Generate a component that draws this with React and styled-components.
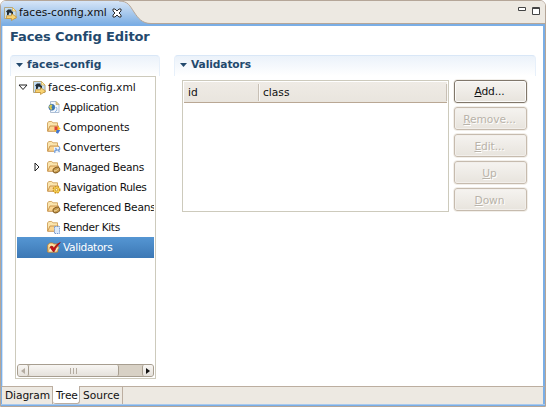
import React from "react";
import styled, { createGlobalStyle } from "styled-components";

const Global = createGlobalStyle`
  * { box-sizing: border-box; }
  body { margin: 0; overflow: hidden; background: #fff; }
`;

const Editor = styled.div`
  width: 546px;
  height: 407px;
  display: flex;
  flex-direction: column;
  background: #fff;
  border: 1px solid #b5a698;
  border-radius: 6px 6px 0 0;
  overflow: hidden;
  font-family: "DejaVu Sans", sans-serif;
  font-size: 10.67px;
  color: #111;
  white-space: nowrap;
`;
const Label = styled.span`
  letter-spacing: ${(p) => p.$ls || 0}px;
`;
const TitleBar = styled.header`
  height: 23px;
  flex: none;
  display: flex;
  align-items: flex-start;
  background: #ede9e2;
  border-bottom: 1px solid #b5a698;
`;
const FileTab = styled.div`
  width: 118px;
  height: 23px;
  flex: none;
  display: flex;
  align-items: center;
  padding-left: 2px;
  background: linear-gradient(#d6e5f7, #7eafe3);
  z-index: 1;

  > * {
    flex: none;
  }
`;
const FileName = styled(Label)`
  margin: 0 5px 0 1px;
  width: 88px;
`;
const WindowButtons = styled.div`
  margin-left: auto;
  display: flex;
  gap: 4px;
  padding: 5px 4px 0 0;
`;
const Body = styled.main`
  flex: 1;
  display: flex;
  flex-direction: column;
  border: solid #7aaee6;
  border-width: 2px 2px 0 1px;
  box-shadow: inset 1px 0 #d0e2f6;
`;
const Heading = styled.h1`
  margin: 0;
  height: 29px;
  padding: 1px 0 0 8px;
  font-size: 13px;
  line-height: 20px;
  color: #23496d;
`;
const Columns = styled.div`
  flex: 1;
  display: flex;
  gap: 14px;
  padding: 0 7px 0 8px;
`;
const Section = styled.section`
  width: ${(p) => p.$w}px;
  display: flex;
  flex-direction: column;
`;
const SectionTitle = styled.h2`
  margin: 0;
  height: 21px;
  flex: none;
  display: flex;
  align-items: center;
  gap: 4px;
  padding: 0 0 3px 5px;
  font-size: 10.67px;
  color: #23496d;
  border: 1px solid #d9e7f7;
  border-bottom: 0;
  border-left-color: #e7f0fa;
  border-right-color: #e7f0fa;
  border-radius: 4px 4px 0 0;
  background: linear-gradient(#ebf2fa, #fff);
`;
const Tree = styled.div`
  margin-left: 5px;
  width: 141px;
  height: 303px;
  display: flex;
  flex-direction: column;
  border: 1px solid #cdcabc;
  padding: 0 1px 1px;
`;
const Row = styled.div`
  height: ${(p) => (p.$selected ? 21 : 20)}px;
  flex: none;
  display: flex;
  align-items: center;
  padding-left: ${(p) => (p.$root ? 0 : 14)}px;
  overflow: hidden;
  color: ${(p) => (p.$selected ? "#fff" : "#111")};
  background: ${(p) => (p.$selected ? "linear-gradient(#5596d3, #3c78b5)" : "none")};
`;
const Twisty = styled.span`
  width: ${(p) => (p.$root ? 15 : 16)}px;
  display: flex;
  flex: none;
  padding-left: ${(p) => (p.$root ? 1 : 3)}px;
`;
const RowIcon = styled.span`
  width: 16px;
  display: flex;
  flex: none;
`;
const ScrollBar = styled.div`
  margin-top: auto;
  height: 13px;
  display: flex;
  flex: none;
  border: 1px solid #a79e90;
  border-radius: 3px;
  background: #d8d1c5;
`;
const ScrollPart = styled.div`
  width: ${(p) => p.$w}px;
  margin-left: ${(p) => p.$gap || 0}px;
  display: flex;
  align-items: center;
  justify-content: center;
  border-radius: 2px;
  background: linear-gradient(#f8f6f3, #e5e1db);
  border: solid #a79e90;
  border-width: 0 ${(p) => (p.$right ? 1 : 0)}px 0 ${(p) => (p.$left ? 1 : 0)}px;
`;
const TablePane = styled.div`
  display: flex;
  gap: 4px;
  padding: 4px 0 0 8px;
`;
const Table = styled.div`
  width: 267px;
  height: 132px;
  border: 1px solid #cdcabc;
  padding: 1px;
`;
const TableHead = styled.div`
  height: 21px;
  display: flex;
  align-items: center;
  background: linear-gradient(#efebe5, #e9e5de);
  border-bottom: 1px solid #b9a794;
`;
const Th = styled.div`
  width: ${(p) => p.$w}px;
  height: 17px;
  padding-left: 4px;
  line-height: 17px;
  border-right: 1px solid #c8c0b5;
  box-shadow: 1px 0 #faf8f5;
`;
const Buttons = styled.div`
  display: flex;
  flex-direction: column;
  gap: 2px;
  margin-top: -1px;
`;
const Button = styled.button`
  width: 75px;
  height: 25px;
  padding: ${(p) => (p.disabled ? "1px 2px 0 0" : "0 2px 0 0")};
  font: inherit;
  letter-spacing: -0.1px;
  color: ${(p) => (p.disabled ? "#b9b3a9" : "#111")};
  text-shadow: ${(p) => (p.disabled ? "1px 1px #fff" : "none")};
  border: 1px solid #f2efea;
  border-radius: 4px;
  background: linear-gradient(#f6f4f1, #e7e3dc);
  box-shadow: inset 0 0 0 1px ${(p) => (p.disabled ? "#c6bbae" : "#80776b")},
    inset 0 0 0 2px ${(p) => (p.disabled ? "#f2efeb" : "#fcfbfa")};
`;
const PageTabs = styled.nav`
  height: 18px;
  flex: none;
  display: flex;
  background: #ede9e2;
  border-top: 1px solid #bcaea0;
  border-left: 1px solid #7aaee6;
  border-right: 2px solid #7aaee6;
`;
const PageTab = styled.div`
  width: ${(p) => p.$w}px;
  padding-left: 3px;
  line-height: 17px;
  border-right: 1px solid #bcaea0;
  background: ${(p) => (p.$active ? "#fff" : "none")};
  margin-top: ${(p) => (p.$active ? -1 : 0)}px;
  padding-top: ${(p) => (p.$active ? 1 : 0)}px;
  border-bottom: ${(p) => (p.$active ? "1px solid #bcaea0" : "0")};
  border-radius: ${(p) => (p.$active ? "0 0 3px 3px" : "0")};
`;
const BottomEdge = styled.div`
  height: 2px;
  flex: none;
  background: linear-gradient(#a9c9ed 50%, #7aaee6 50%);
`;

const PageIcon = () => (
  <svg width="15" height="16" viewBox="0 0 15 16">
    <path d="M1.5 2.5h8l3.5 3.5v7.5H1.5z" fill="#c4def3" stroke="#b3a680" />
    <path d="M9.5 2.5V6H13z" fill="#fff3b5" stroke="#d2a94e" strokeWidth=".7" />
    <path d="m3 6.5 2-2h3.5V6L10 7v3H8V8L6.5 7.5 5.5 10H4V7.5z" fill="#222d35" />
    <path d="M3.5 13.5v-2.8h5V8.5l5.2 3.7-5.2 3.3v-2z" fill="#f8d372" stroke="#c08d30" strokeWidth=".7" />
  </svg>
);
const CloseIcon = () => (
  <svg width="10" height="10" viewBox="0 0 10 10">
    <path d="M1 1h2l2 2 2-2h2v2L7 5l2 2v2H7L5 7 3 9H1V7l2-2-2-2z" fill="#fff" stroke="#2a2d31" strokeWidth="1" />
  </svg>
);
const TabCurve = () => (
  <svg width="32" height="23" viewBox="0 0 32 23">
    <defs>
      <linearGradient id="tab" x2="0" y2="1">
        <stop stopColor="#d6e5f7" />
        <stop offset="1" stopColor="#7eafe3" />
      </linearGradient>
    </defs>
    <path d="M0 0C9 0 11 5 15 11S23 22.5 32 22.5V23H0z" fill="url(#tab)" />
    <path d="M0 0C9 0 11 5 15 11S23 22.5 32 22.5" fill="none" stroke="#b5a698" />
  </svg>
);
const Arrow = () => (
  <svg width="7" height="4" viewBox="0 0 7 4"><path d="M0 0h7L3.5 4z" fill="#23496d" /></svg>
);
const OpenTwisty = () => (
  <svg width="10" height="7" viewBox="0 0 10 7"><path d="M1 1h8L5 5.5z" fill="#fff" stroke="#222" /></svg>
);
const ClosedTwisty = () => (
  <svg width="6" height="10" viewBox="0 0 6 10"><path d="M1 1v8l4-4z" fill="#fff" stroke="#222" /></svg>
);

const badges = {
  components: (
    <>
      <path d="M7.5 7.5H11v4H7.5z" fill="#dd4238" />
      <path d="m10.5 7 3.2 2.5-3.2 2.5z" fill="#f6bd2b" />
      <path d="M7 11h3v3z" fill="#efbd30" />
      <path d="M9.5 11h3.8L11 14.8l-2-1z" fill="#4576cf" />
    </>
  ),
  converters: (
    <>
      <path d="M7 8h6v6H7z" fill="#eef4fc" />
      <path d="M8 14c-1-2 0-3.6 2-3.2M8.4 9 10 10.8 8.2 12M12 7.5c1.5 2 .8 4-1 3.7M12.8 9.8l-1.8 1.4 1.6 1.7" fill="none" stroke="#7ca3d9" strokeWidth="1.2" />
    </>
  ),
  bean: (
    <>
      <ellipse cx="9.4" cy="11" rx="3.5" ry="2.7" transform="rotate(-25 9.4 11)" fill="#c6994c" stroke="#80591f" strokeWidth=".9" />
      <path d="M7 12c2-.2 3.2-1 4.5-2.2" fill="none" stroke="#f7e0a4" />
    </>
  ),
  rules: (
    <>
      <circle cx="9.5" cy="10.7" r="3.3" fill="#f7d153" stroke="#cb9220" strokeWidth="1.4" strokeDasharray="1.6 1.1" />
      <circle cx="9.5" cy="10.7" r="1.2" fill="#fff4c5" stroke="#b77a12" strokeWidth=".6" />
    </>
  ),
  kit: <path d="M7.5 7.5h5v7h-5z" fill="#dbe9fb" stroke="#7598cc" strokeDasharray="1.4 .8" />,
};
const FolderIcon = ({ kind }) => (
  <svg width="16" height="16" viewBox="0 0 16 16">
    <path d="M.5 12V4l1.2-1.5h3L6 3.8h4.5V7" fill="#fbe5ae" stroke="#cfa25a" strokeWidth=".9" />
    <path d="M.6 12.3 3 7h8.7l-2.4 5.3z" fill="#fbd590" stroke="#c48f48" strokeWidth=".9" />
    {badges[kind]}
  </svg>
);
const ApplicationIcon = () => (
  <svg width="16" height="16" viewBox="0 0 16 16">
    <path d="M3.5 2.5h5.5l3 3v8H3.5z" fill="#f3f8fe" stroke="#a4b7cf" strokeWidth=".9" />
    <path d="M9 2.5v3h3z" fill="#ead48d" stroke="#bd9f5b" strokeWidth=".6" />
    <circle cx="4.8" cy="8.3" r="3" fill="#3978b9" stroke="#3f6b97" strokeWidth=".6" />
    <path d="M2 8c1-3 3-2.5 3.5-1L4.3 8l1 1.7L4 11.2z" fill="#d6c94f" />
    <path d="M9 8c1.5 1.5 1 4-1 5" fill="none" stroke="#8bb5e3" />
  </svg>
);
const ValidatorIcon = () => (
  <svg width="16" height="16" viewBox="0 0 16 16">
    <path d="M.7 12V5l2-2h3l1 1h4v8z" fill="#fbe0a2" stroke="#c47c25" strokeWidth=".8" />
    <path d="m1 12 2-5h9l-2.5 5z" fill="#fff0ca" stroke="#d2a052" strokeWidth=".8" />
    <path d="m3 7 2-1 2 2.3Q9 4 13.3 2.5q-4.3 4-6 9H6z" fill="#c81216" stroke="#9c0b10" strokeWidth=".7" />
  </svg>
);

const rows = [
  { text: "Application", icon: <ApplicationIcon />, ls: -0.35 },
  { text: "Components", icon: <FolderIcon kind="components" />, ls: -0.1 },
  { text: "Converters", icon: <FolderIcon kind="converters" />, ls: -0.15 },
  { text: "Managed Beans", icon: <FolderIcon kind="bean" />, ls: -0.33, closed: true },
  { text: "Navigation Rules", icon: <FolderIcon kind="rules" />, ls: -0.38 },
  { text: "Referenced Beans", icon: <FolderIcon kind="bean" />, ls: -0.25 },
  { text: "Render Kits", icon: <FolderIcon kind="kit" />, ls: -0.38 },
  { text: "Validators", icon: <ValidatorIcon />, ls: -0.35, selected: true },
];
const actions = [
  ["A", "dd..."],
  ["R", "emove..."],
  ["E", "dit..."],
  ["U", "p"],
  ["D", "own"],
];

export default function App() {
  return (
    <>
      <Global />
      <Editor>
        <TitleBar>
          <FileTab>
            <PageIcon />
            <FileName>faces-config.xml</FileName>
            <CloseIcon />
          </FileTab>
          <TabCurve />
          <WindowButtons>
            <svg width="10" height="6" viewBox="0 0 10 6">
              <path d="M1.5 1.5h7v3h-7z" fill="#fff" stroke="#444" />
            </svg>
            <svg width="10" height="10" viewBox="0 0 10 10">
              <path d="M1.5 1.5h7v7h-7zM1 2.5h8" fill="#fff" stroke="#444" />
            </svg>
          </WindowButtons>
        </TitleBar>
        <Body>
          <Heading><Label $ls={-0.1}>Faces Config Editor</Label></Heading>
          <Columns>
            <Section $w={150}>
              <SectionTitle><Arrow /><Label $ls={0.1}>faces-config</Label></SectionTitle>
              <Tree>
                <Row $root>
                  <Twisty $root><OpenTwisty /></Twisty>
                  <RowIcon><PageIcon /></RowIcon>
                  <Label>faces-config.xml</Label>
                </Row>
                {rows.map((r) => (
                  <Row key={r.text} $selected={r.selected}>
                    <Twisty>{r.closed && <ClosedTwisty />}</Twisty>
                    <RowIcon>{r.icon}</RowIcon>
                    <Label $ls={r.ls}>{r.text}</Label>
                  </Row>
                ))}
                <ScrollBar>
                  <ScrollPart $w={11} $right>
                    <svg width="4" height="6" viewBox="0 0 4 6"><path d="M4 0v6L0 3z" fill="#b4aca1" /></svg>
                  </ScrollPart>
                  <ScrollPart $w={90} $right>
                    <svg width="7" height="6" viewBox="0 0 7 6"><path d="M.5 0v6m3-6v6m3-6v6" stroke="#b4aca1" /></svg>
                  </ScrollPart>
                  <ScrollPart $w={11} $gap={23} $left>
                    <svg width="4" height="6" viewBox="0 0 4 6"><path d="M0 0v6l4-3z" fill="#111" /></svg>
                  </ScrollPart>
                </ScrollBar>
              </Tree>
            </Section>
            <Section $w={362}>
              <SectionTitle><Arrow /><Label $ls={-0.1}>Validators</Label></SectionTitle>
              <TablePane>
                <Table>
                  <TableHead>
                    <Th $w={75}>id</Th>
                    <Th $w={188}>class</Th>
                  </TableHead>
                </Table>
                <Buttons>
                  {actions.map(([key, rest], i) => (
                    <Button key={key} disabled={i > 0}>
                      <u>{key}</u>{rest}
                    </Button>
                  ))}
                </Buttons>
              </TablePane>
            </Section>
          </Columns>
        </Body>
        <PageTabs>
          <PageTab $w={51}><Label $ls={-0.1}>Diagram</Label></PageTab>
          <PageTab $w={27} $active><Label $ls={-0.1}>Tree</Label></PageTab>
          <PageTab $w={43}>Source</PageTab>
        </PageTabs>
        <BottomEdge />
      </Editor>
    </>
  );
}
